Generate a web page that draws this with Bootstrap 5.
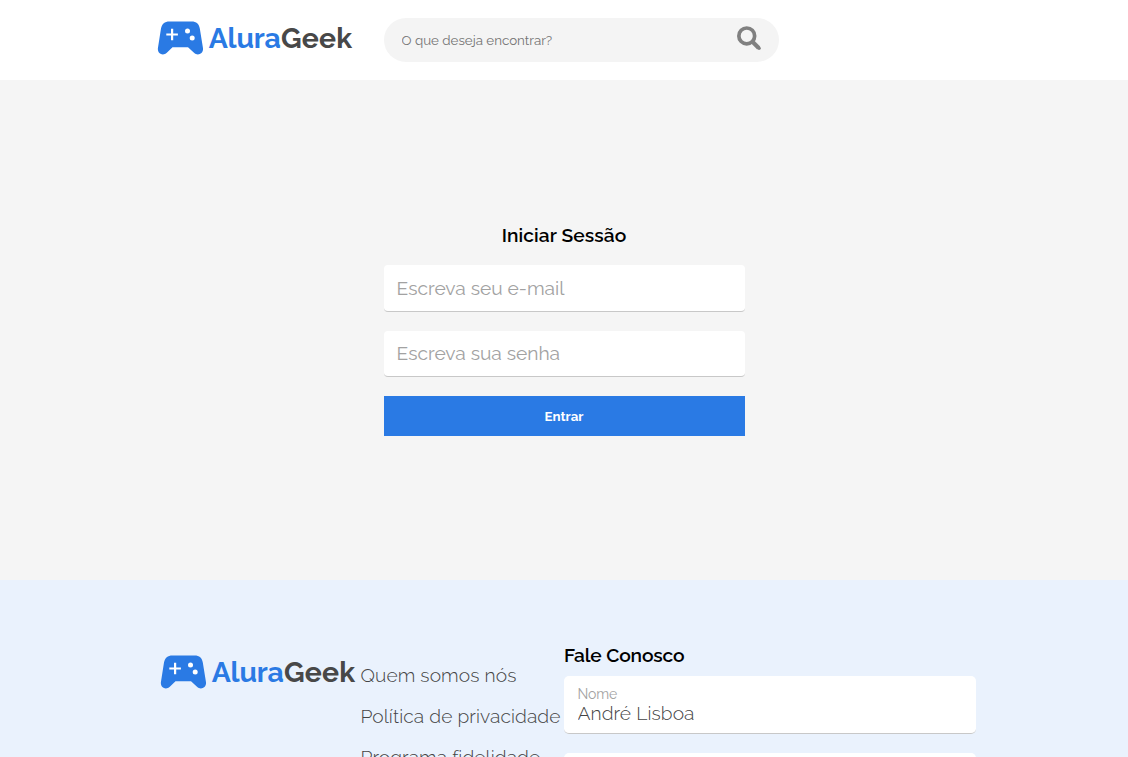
<!DOCTYPE html>
<html lang="pt-BR">
<head>
<meta charset="utf-8">
<meta name="viewport" content="width=device-width, initial-scale=1">
<title>AluraGeek - Iniciar Sessão</title>
<link rel="stylesheet" href="https://cdn.jsdelivr.net/npm/bootstrap@5.3.0/dist/css/bootstrap.min.css">
<style>
  body { font-family: Raleway, Lato, sans-serif; height: 100vh; overflow: hidden; color: #000; }
  .site-header { height: 80px; padding: 18px 0 0 157px; }
  .brand-logo { width: 197px; height: 38px; }
  .logo-word { font: 700 28.4px Raleway, Lato, sans-serif; }
  .search-box { width: 395px; height: 44px; margin-left: 30px; padding: 0 18px 0 17.5px; border-radius: 22px; background: #f4f4f4; }
  .search-box input { font-size: 13.33px; height: 20px; margin-bottom: 1px; }
  .search-box input::placeholder { color: #757575; opacity: 1; }
  .search-box svg { margin-bottom: 4px; }
  .login-area { height: 500px; padding-top: 144px; background: #f5f5f5; }
  .login-form { width: 361px; }
  .section-title { font-size: 19.2px; font-weight: 600; line-height: 23px; color: #000; }
  .login-form .section-title { margin-bottom: 18px; letter-spacing: .1px; }
  .contact-form .section-title { margin-bottom: 9px; letter-spacing: -.14px; }
  .geek-input { font-size: 19.2px; height: 46.6px; margin-bottom: 19px; padding: 0 13px; border: 0; border-bottom: 1px solid #c8c8c8; border-radius: 4px; color: #444; }
  .geek-input::placeholder { color: #a2a2a2; opacity: 1; }
  .btn-enter { height: 40px; padding: 1px 0 0; font-size: 13.33px; font-weight: 700; color: #fff; background: #2a7ae4; }
  .site-footer { height: 400px; padding: 64px 0 0 160px; background: #eaf2fd; }
  .footer-logo { width: 200.5px; padding-top: 8px; }
  .footer-links { width: 203.5px; padding-top: 20px; font-size: 19.2px; font-weight: 300; line-height: 23px; letter-spacing: .1px; }
  .footer-links li { margin-bottom: 18px; white-space: nowrap; }
  .footer-links a { color: #444; }
  .contact-form { width: 412px; }
  .contact-field { height: 58px; margin-bottom: 19px; padding: 9px 13.5px 0; border-bottom: 1px solid #c8c8c8; border-radius: 5px; background: #fff; }
  .contact-field label { font-size: 14px; line-height: 18px; color: #a2a2a2; letter-spacing: -.15px; }
  .contact-field input { font-size: 19.2px; font-weight: 300; line-height: 21px; color: #444; letter-spacing: .1px; }
</style>
</head>
<body>
<svg class="d-none" aria-hidden="true">
  <symbol id="logo" viewBox="0 0 197 38">
    <path fill="#2a7ae4" d="M12.500 3.500H34.500C39.500 3.500 42 6 42.800 10.500L46 30.300C46.600 36 40.500 38.200 37 34.800L31 29.200H15.500L9.800 34.800C6.200 38.200 .3 36 .9 30.300L4 10.500C5 6 7.500 3.500 12.500 3.500Z"/>
    <path d="M9.300 16.500H20.900M15.100 10.700V22.300" fill="none" stroke="#fff" stroke-width="2.200"/>
    <circle cx="30.500" cy="13" r="2.500" fill="#fff"/><circle cx="35.200" cy="20" r="2.500" fill="#fff"/>
    <text class="logo-word" x="51.800" y="30.300" textLength="72" fill="#2a7ae4">Alura</text><text class="logo-word" x="124" y="30.300" textLength="71" fill="#484848">Geek</text>
  </symbol>
</svg>
<header class="site-header d-flex align-items-start bg-white">
  <a href="#" class="d-block lh-1" aria-label="AluraGeek"><svg class="brand-logo"><use href="#logo"/></svg></a>
  <div class="search-box d-flex align-items-center">
    <input class="form-control border-0 bg-transparent p-0 shadow-none" type="text" placeholder="O que deseja encontrar?">
    <svg class="flex-shrink-0" width="24" height="24" viewBox="0 0 24 24" fill="none" stroke="#808080"><circle cx="9.750" cy="9.900" r="7.900" stroke-width="3.700"/><path d="M15.500 15.700L21.700 21.900" stroke-width="4.200"/><circle cx="22.100" cy="22.200" r="1.700" fill="#808080" stroke="none"/></svg>
  </div>
</header>
<main class="login-area">
  <form class="login-form mx-auto d-flex flex-column">
    <h1 class="section-title text-center">Iniciar Sessão</h1>
    <input class="geek-input form-control" type="email" placeholder="Escreva seu e-mail">
    <input class="geek-input form-control" type="password" placeholder="Escreva sua senha">
    <button class="btn btn-enter rounded-0 border-0" type="button">Entrar</button>
  </form>
</main>
<footer class="site-footer d-flex align-items-start">
  <div class="footer-logo flex-shrink-0"><svg class="brand-logo d-block"><use href="#logo"/></svg></div>
  <ul class="footer-links list-unstyled mb-0 flex-shrink-0">
    <li><a class="text-decoration-none" href="#">Quem somos nós</a></li>
    <li><a class="text-decoration-none" href="#">Política de privacidade</a></li>
    <li><a class="text-decoration-none" href="#">Programa fidelidade</a></li>
  </ul>
  <form class="contact-form flex-shrink-0">
    <h2 class="section-title">Fale Conosco</h2>
    <div class="contact-field d-flex flex-column">
      <label for="nome">Nome</label>
      <input id="nome" class="form-control border-0 p-0 bg-transparent" type="text" value="André Lisboa">
    </div>
    <div class="contact-field"></div>
  </form>
</footer>
<script src="https://cdn.jsdelivr.net/npm/bootstrap@5.3.0/dist/js/bootstrap.bundle.min.js"></script>
</body>
</html>
